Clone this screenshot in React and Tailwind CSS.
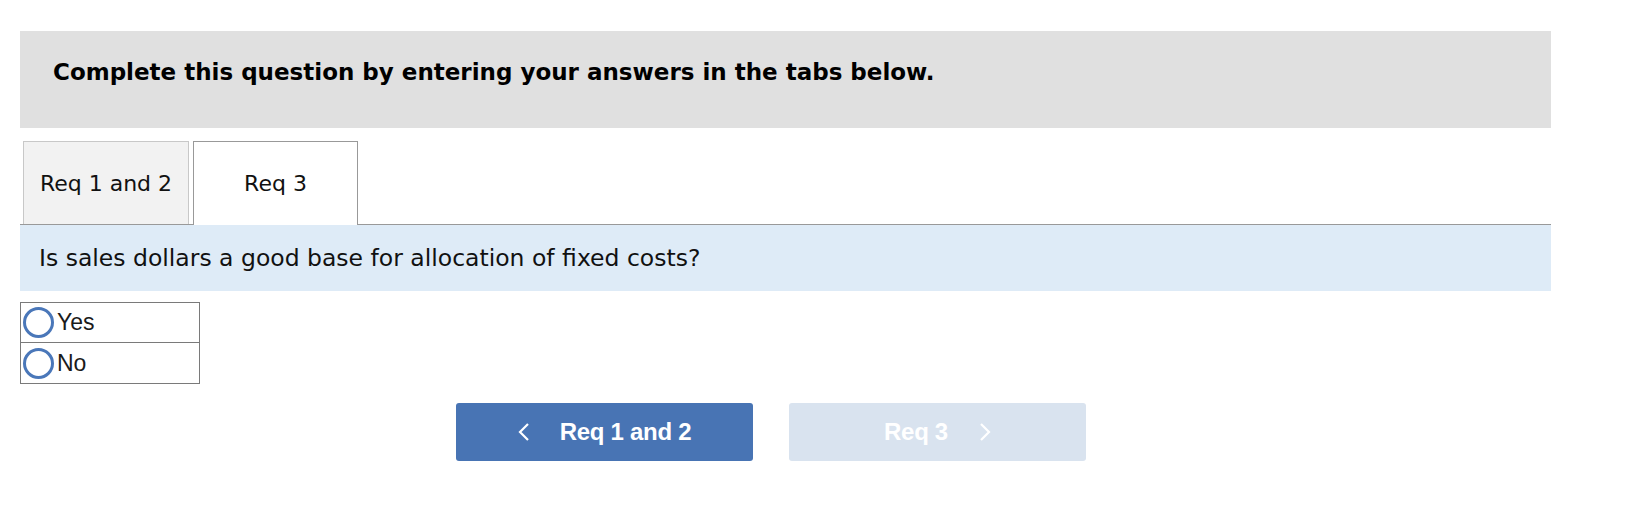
import React from 'react';

const verdana = { fontFamily: '"DejaVu Sans", Verdana, sans-serif' };

function Radio({ label }) {
  return (
    <label className="flex items-center h-[40px] pl-[2px] cursor-pointer">
      <span className="w-[31px] h-[31px] rounded-full border-[3px] border-[#4a77b9] bg-white shrink-0" />
      <span className="ml-[3px] text-[23px] text-[#1a1a1a] font-['Liberation_Sans',Arial,sans-serif]">{label}</span>
    </label>
  );
}

function Chevron({ dir }) {
  return (
    <svg width="12" height="18" viewBox="0 0 12 18" fill="none" stroke="currentColor" strokeWidth="2.2">
      {dir === 'left' ? <polyline points="10,1 2,9 10,17" /> : <polyline points="2,1 10,9 2,17" />}
    </svg>
  );
}

export default function App() {
  return (
    <div className="min-h-screen bg-white pt-[31px] pl-[20px]">
      <div className="w-[1531px]">
        {/* Instructions header */}
        <div className="bg-[#e0e0e0] h-[97px] pl-[33px] pt-[27px]" style={verdana}>
          <p className="text-[23px] font-bold text-black leading-[28px]">
            Complete this question by entering your answers in the tabs below.
          </p>
        </div>

        {/* Tabs */}
        <div className="mt-[13px] flex items-end gap-[4px] pl-[3px] border-b border-[#999]" style={verdana}>
          <button className="w-[166px] h-[83px] bg-[#f2f2f2] border border-b-0 border-[#c8c8c8] text-[22px] text-[#111]">
            Req 1 and 2
          </button>
          <button className="w-[165px] h-[84px] -mb-px bg-white border border-b-0 border-[#999] text-[22px] text-[#111]">
            Req 3
          </button>
        </div>

        {/* Question */}
        <div className="bg-[#deebf7] h-[66px] flex items-center pl-[19px] pt-[2px]" style={verdana}>
          <p className="text-[23.5px] text-[#111]">Is sales dollars a good base for allocation of fixed costs?</p>
        </div>

        {/* Options */}
        <div className="mt-[11px] w-[180px] border border-[#7a7a7a] divide-y divide-[#7a7a7a]">
          <Radio label="Yes" />
          <Radio label="No" />
        </div>

        {/* Navigation */}
        <div className="mt-[19px] ml-[436px] flex gap-[36px] font-['Liberation_Sans',Arial,sans-serif]">
          <button className="w-[297px] h-[58px] rounded-[3px] bg-[#4874b4] text-white flex items-center justify-center gap-[30px]">
            <Chevron dir="left" />
            <span className="text-[24px] font-bold tracking-[-0.3px]">Req 1 and 2</span>
          </button>
          <button className="w-[297px] h-[58px] rounded-[3px] bg-[#d9e3ef] text-white flex items-center justify-center gap-[31px]">
            <span className="text-[24px] font-bold tracking-[-0.3px]">Req 3</span>
            <Chevron dir="right" />
          </button>
        </div>
      </div>
    </div>
  );
}
